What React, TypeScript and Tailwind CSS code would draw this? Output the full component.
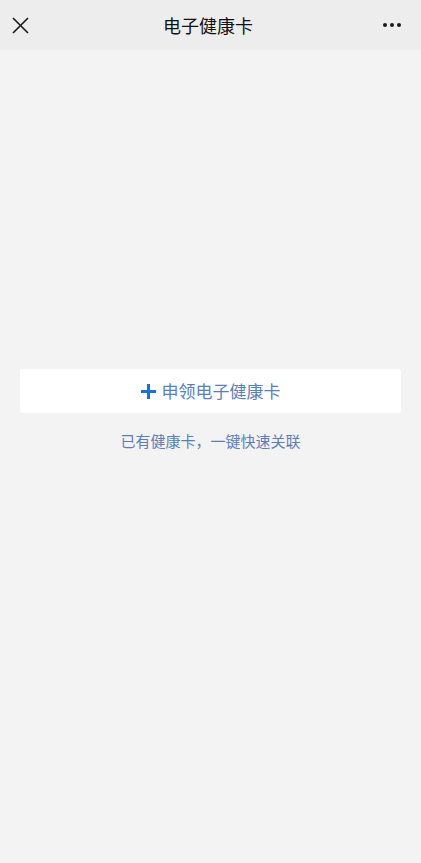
// Electronic health card entry page
export default function App() {
  return (
    <div
      className="min-h-[863px] bg-[#f3f3f3] flex flex-col"
      style={{ fontFamily: '"Noto Sans CJK SC", "Noto Sans", sans-serif' }}
    >
      {/* Header */}
      <header className="h-[50px] bg-[#ededed] flex items-center justify-between px-[11px]">
        <button className="w-[18px] h-[18px] flex items-center justify-center">
          <svg width="17" height="17" viewBox="0 0 17 17" fill="none" stroke="#1a1a1a" strokeWidth="1.6">
            <path d="M1 1L16 16M16 1L1 16" />
          </svg>
        </button>
        <h1 className="text-[18px] text-[#111] leading-none ml-[4px]">电子健康卡</h1>
        <button className="flex items-center gap-[3px] pr-[9px]">
          <span className="w-[4px] h-[4px] rounded-full bg-[#1a1a1a]"></span>
          <span className="w-[4px] h-[4px] rounded-full bg-[#1a1a1a]"></span>
          <span className="w-[4px] h-[4px] rounded-full bg-[#1a1a1a]"></span>
        </button>
      </header>

      {/* Body */}
      <main className="flex flex-col items-center pt-[319px]">
        <button className="w-[381px] h-[44px] bg-white rounded-[2px] flex items-center justify-center gap-[6px]">
          <svg width="15" height="15" viewBox="0 0 15 15" fill="#1a6fd8">
            <rect x="6" y="0" width="3" height="15" />
            <rect x="0" y="6" width="15" height="3" />
          </svg>
          <span className="text-[17px] text-[#5b7fb5]">申领电子健康卡</span>
        </button>
        <a className="mt-[17px] text-[15px] text-[#5b7fb5]">已有健康卡，一键快速关联</a>
      </main>
    </div>
  );
}
